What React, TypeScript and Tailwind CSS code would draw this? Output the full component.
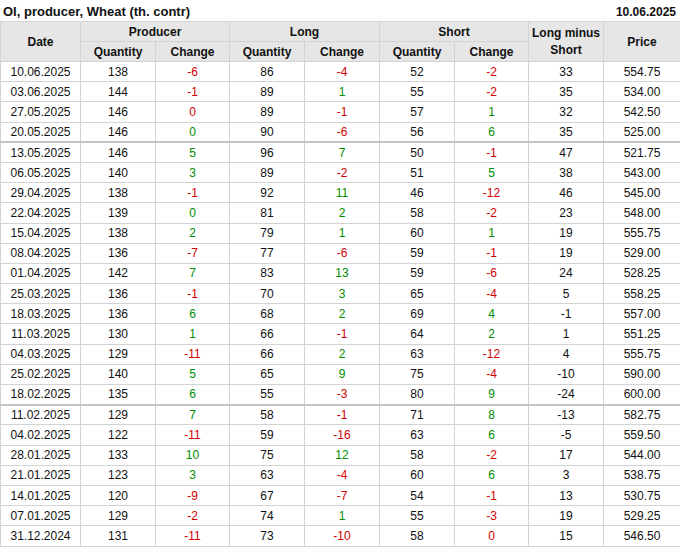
type Row = [string, number, number, number, number, number, number, number, string];

// -0 marks a zero change that the source shows in red
const rows: Row[] = [
  ["10.06.2025", 138, -6, 86, -4, 52, -2, 33, "554.75"],
  ["03.06.2025", 144, -1, 89, 1, 55, -2, 35, "534.00"],
  ["27.05.2025", 146, -0, 89, -1, 57, 1, 32, "542.50"],
  ["20.05.2025", 146, 0, 90, -6, 56, 6, 35, "525.00"],
  ["13.05.2025", 146, 5, 96, 7, 50, -1, 47, "521.75"],
  ["06.05.2025", 140, 3, 89, -2, 51, 5, 38, "543.00"],
  ["29.04.2025", 138, -1, 92, 11, 46, -12, 46, "545.00"],
  ["22.04.2025", 139, 0, 81, 2, 58, -2, 23, "548.00"],
  ["15.04.2025", 138, 2, 79, 1, 60, 1, 19, "555.75"],
  ["08.04.2025", 136, -7, 77, -6, 59, -1, 19, "529.00"],
  ["01.04.2025", 142, 7, 83, 13, 59, -6, 24, "528.25"],
  ["25.03.2025", 136, -1, 70, 3, 65, -4, 5, "558.25"],
  ["18.03.2025", 136, 6, 68, 2, 69, 4, -1, "557.00"],
  ["11.03.2025", 130, 1, 66, -1, 64, 2, 1, "551.25"],
  ["04.03.2025", 129, -11, 66, 2, 63, -12, 4, "555.75"],
  ["25.02.2025", 140, 5, 65, 9, 75, -4, -10, "590.00"],
  ["18.02.2025", 135, 6, 55, -3, 80, 9, -24, "600.00"],
  ["11.02.2025", 129, 7, 58, -1, 71, 8, -13, "582.75"],
  ["04.02.2025", 122, -11, 59, -16, 63, 6, -5, "559.50"],
  ["28.01.2025", 133, 10, 75, 12, 58, -2, 17, "544.00"],
  ["21.01.2025", 123, 3, 63, -4, 60, 6, 3, "538.75"],
  ["14.01.2025", 120, -9, 67, -7, 54, -1, 13, "530.75"],
  ["07.01.2025", 129, -2, 74, 1, 55, -3, 19, "529.25"],
  ["31.12.2024", 131, -11, 73, -10, 58, -0, 15, "546.50"],
];

// rows that start a new block get the heavier top line
const blockStarts = ["13.05.2025", "11.02.2025"];

const Change = ({ v }: { v: number }) => {
  const red = v < 0 || Object.is(v, -0);
  return (
    <td className={`border border-[#d3d3d3] ${red ? "text-[#d00000]" : "text-[#008c00]"}`}>
      {Object.is(v, -0) ? "0" : v}
    </td>
  );
};

const Cell = ({ children }: { children: React.ReactNode }) => (
  <td className="border border-[#d3d3d3] text-[#111]">{children}</td>
);

const App = () => {
  return (
    <div className="w-[680px] h-[548px] bg-white font-['Liberation_Sans',Arial,sans-serif] overflow-hidden">
      <div className="flex justify-between items-end h-[21px] pl-[3px] pr-[4px] pb-[3px]">
        <span className="text-[13px] font-bold leading-none text-[#111]">
          OI, producer, Wheat (th. contr)
        </span>
        <span className="text-[12px] font-bold leading-none text-[#111]">10.06.2025</span>
      </div>
      <table className="table-fixed border-collapse w-[680px] text-[12px] text-center">
        <colgroup>
          <col className="w-[80px]" />
          <col className="w-[75px]" />
          <col className="w-[74px]" />
          <col className="w-[75px]" />
          <col className="w-[75px]" />
          <col className="w-[75px]" />
          <col className="w-[74px]" />
          <col className="w-[75px]" />
          <col className="w-[77px]" />
        </colgroup>
        <thead className="bg-[#e6e6e6] font-bold text-[#111]">
          <tr className="h-[20px]">
            <th rowSpan={2} className="border border-[#d3d3d3] font-bold">Date</th>
            <th colSpan={2} className="border border-[#d3d3d3] font-bold">Producer</th>
            <th colSpan={2} className="border border-[#d3d3d3] font-bold">Long</th>
            <th colSpan={2} className="border border-[#d3d3d3] font-bold">Short</th>
            <th rowSpan={2} className="border border-[#d3d3d3] font-bold leading-[17px]">
              Long minus
              <br />
              Short
            </th>
            <th rowSpan={2} className="border border-[#d3d3d3] font-bold">Price</th>
          </tr>
          <tr className="h-[20px]">
            <th className="border border-[#d3d3d3] font-bold">Quantity</th>
            <th className="border border-[#d3d3d3] font-bold">Change</th>
            <th className="border border-[#d3d3d3] font-bold">Quantity</th>
            <th className="border border-[#d3d3d3] font-bold">Change</th>
            <th className="border border-[#d3d3d3] font-bold">Quantity</th>
            <th className="border border-[#d3d3d3] font-bold">Change</th>
          </tr>
        </thead>
        <tbody>
          {rows.map((r) => (
            <tr
              key={r[0]}
              className={`h-[20.2px] ${blockStarts.includes(r[0]) ? "border-t-2 border-t-[#c4c4c4]" : ""}`}
            >
              <Cell>{r[0]}</Cell>
              <Cell>{r[1]}</Cell>
              <Change v={r[2]} />
              <Cell>{r[3]}</Cell>
              <Change v={r[4]} />
              <Cell>{r[5]}</Cell>
              <Change v={r[6]} />
              <Cell>{r[7]}</Cell>
              <Cell>{r[8]}</Cell>
            </tr>
          ))}
        </tbody>
      </table>
    </div>
  );
};

export default App;
